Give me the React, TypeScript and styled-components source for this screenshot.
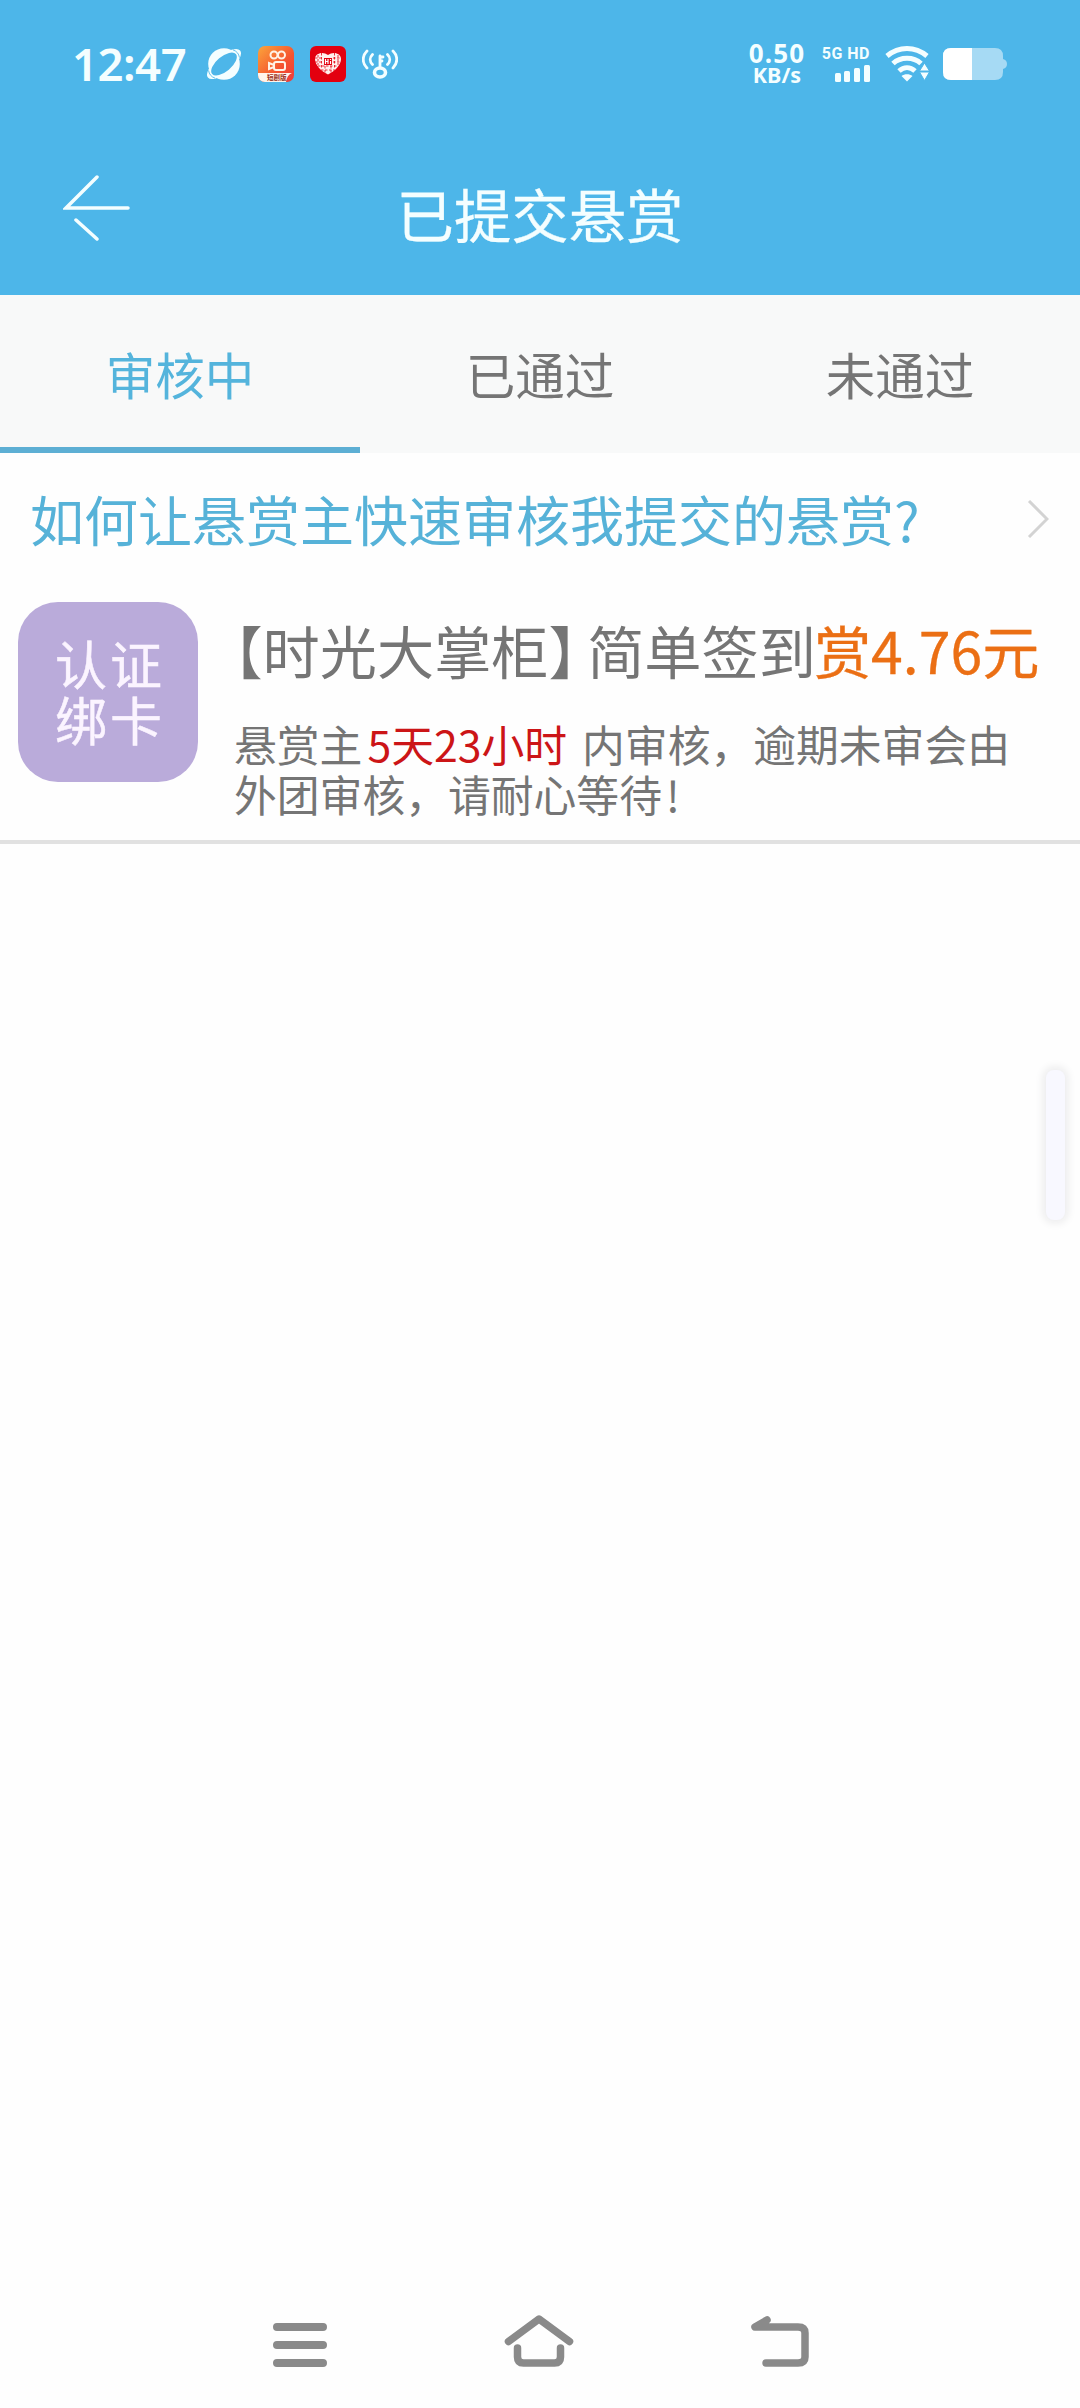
import React from 'react';
import styled, { createGlobalStyle } from 'styled-components';

const Global = createGlobalStyle`
  * { box-sizing: border-box; }
  html, body { margin: 0; background: #fefefe; }
  body { font-family: "Noto Sans CJK SC", "Noto Sans", sans-serif; }
  svg { display: block; flex: none; }
`;

const Screen = styled.div`
  width: 1080px;
  height: 2408px;
  display: flex;
  flex-direction: column;
  background: #fefefe;
  color: #757575;
  position: relative;
  overflow: hidden;
`;

const Header = styled.header`
  height: 295px;
  background: #4db6e9;
  color: #f4feff;
`;

const StatusBar = styled.div`
  height: 128px;
  padding: 0 73px 1px 72px;
  display: flex;
  justify-content: space-between;
`;

const StatusGroup = styled.div<{ $gap: number }>`
  display: flex;
  align-items: center;
  gap: ${(p) => p.$gap}px;
`;

const Clock = styled.span`
  width: 115px;
  font: 600 45.5px/60px "Noto Sans", sans-serif;
  letter-spacing: -0.5px;
  white-space: nowrap;
  margin: -2px 3px 0 0;
`;

const Speed = styled.div`
  width: 60px;
  font: 700 26px/22px "Noto Sans", sans-serif;
  text-align: center;
  white-space: nowrap;
  span { display: block; }
  span:first-child { letter-spacing: 1.2px; }
  span + span { font-size: 21.5px; line-height: 21px; }
`;

const Signal = styled.div`
  width: 50px;
  display: flex;
  flex-direction: column;
  align-items: flex-end;
  gap: 4px;
  font: 700 16px/15px Roboto, sans-serif;
  letter-spacing: 0.5px;
  white-space: nowrap;
  margin-right: 2px;
`;

const TitleBar = styled.div`
  height: 167px;
  display: grid;
  grid-template-columns: 200px 1fr 200px;
  align-items: center;
`;

const BackButton = styled.button`
  border: 0;
  padding: 0 0 10px 63px;
  background: none;
  color: inherit;
`;

const Title = styled.h1`
  margin: 3px 0 0;
  font-size: 57.4px;
  line-height: 70px;
  font-weight: 400;
  text-align: center;
  -webkit-text-stroke: 0.3px currentColor;
`;

const Tabs = styled.nav`
  height: 158px;
  display: grid;
  grid-template-columns: repeat(3, 1fr);
  background: #f8f9f9;
`;

const Tab = styled.div<{ $active?: boolean }>`
  display: flex;
  justify-content: center;
  align-items: center;
  padding-top: ${(p) => (p.$active ? 4 : 0)}px;
  padding-bottom: ${(p) => (p.$active ? 0 : 2)}px;
  font-size: 49.5px;
  color: ${(p) => (p.$active ? '#54b4dc' : '#757575')};
  border-bottom: ${(p) => (p.$active ? '6px solid #5dafd4' : '0')};
`;

const Question = styled.div`
  height: 137px;
  padding: 0 31px 5px 30px;
  display: flex;
  align-items: center;
  justify-content: space-between;
  font-size: 54px;
  line-height: 70px;
  white-space: nowrap;
  color: #56b2d8;
`;

const Card = styled.article`
  height: 254px;
  padding: 12px 18px 0;
  display: flex;
  gap: 36px;
  border-bottom: 4px solid #e1e1e1;
`;

const Badge = styled.div`
  width: 180px;
  height: 180px;
  flex: none;
  border-radius: 40px;
  background: #baabda;
  color: #fbf4ff;
  display: flex;
  flex-direction: column;
  justify-content: center;
  padding: 0 0 2px 37px;
  font-size: 52px;
  line-height: 56px;
  letter-spacing: 3px;
  -webkit-text-stroke: 0.5px currentColor;
`;

const CardBody = styled.div`
  flex: 1;
  white-space: nowrap;
`;

const TaskTitle = styled.div`
  margin-top: 9px;
  height: 76px;
  font-size: 57.2px;
  line-height: 76px;
`;

const Bracket = styled.span`
  font-feature-settings: "halt" 1;
  & + & { margin-right: 10px; }
`;

const Reward = styled.span`
  margin-left: -2px;
  color: #eb6f14;
  -webkit-text-stroke: 0.3px currentColor;
`;

const Notice = styled.p`
  margin: 31px 0 0;
  font-size: 42.8px;
  line-height: 50px;
`;

const Remaining = styled.span`
  color: #cc1517;
  margin: 0 15px 0 5px;
`;

const Ending = styled.span`
  margin-left: 4px;
`;

const EdgeHandle = styled.div`
  position: absolute;
  right: 15px;
  top: 1070px;
  width: 19px;
  height: 150px;
  border-radius: 8px;
  background: #f8f8ff;
  box-shadow: 0 0 9px 3px #ebebec;
`;

const NavBar = styled.footer`
  margin-top: auto;
  height: 118px;
  padding: 22px 267px 0 265px;
  display: flex;
  justify-content: space-between;
  color: #8a8a8a;
`;

const PlanetIcon = () => (
  <svg width="36" height="34" viewBox="0 0 36 34">
    <circle cx="18" cy="17" r="15.800" fill="currentColor" />
    <g transform="rotate(-40 18 17)">
      <ellipse cx="18" cy="17" rx="21" ry="8.500" fill="currentColor" />
      <ellipse cx="18" cy="17" rx="15.500" ry="7.500" fill="#4db6e9" />
      <path d="M2 12Q-1 17 2 22M34 12q3 5 0 10" fill="none" stroke="#4db6e9" strokeWidth=".8" />
    </g>
  </svg>
);

const VideoAppIcon = () => (
  <svg width="36" height="36" viewBox="0 0 36 36">
    <defs>
      <linearGradient id="video" x1="0" y1="0" x2="1" y2="1">
        <stop stopColor="#fba53b" /><stop offset=".6" stopColor="#f5542f" /><stop offset="1" stopColor="#ee3a3c" />
      </linearGradient>
      <clipPath id="round"><rect width="36" height="36" rx="7" /></clipPath>
    </defs>
    <g clipPath="url(#round)">
      <rect width="36" height="36" fill="url(#video)" />
      <g fill="none" stroke="#fff3e6" strokeWidth="2">
        <circle cx="16" cy="9" r="3.500" /><circle cx="23.500" cy="9" r="3.500" />
        <rect x="16" y="16" width="11" height="8" rx="2" /><path d="m16 19-5-2v6l5-2" />
      </g>
      <path d="M0 27h34q-5 2-6 9H0z" fill="#fff4ec" />
      <text x="9" y="34" fontSize="6.500" fontWeight="700" fill="#9c3322">短剧版</text>
    </g>
  </svg>
);

const HeartAppIcon = () => (
  <svg width="36" height="36" viewBox="0 0 36 36">
    <rect width="36" height="36" rx="6" fill="#e3000f" />
    <path d="M18 28.500C11 25 5 19 5 13c0-6 8-8 13-4 5-4 13-2 13 4 0 6-6 12-13 15.500Z" fill="#fff0ee" />
    <g fill="none" stroke="#e3000f" strokeWidth=".8" strokeDasharray="2.500 1.500">
      <path d="M8 9v10M11.500 7v16M24.500 7v16M28 9v10M15 20v7M21 20v7" />
      <path d="M5 12h8M5 16h8M23 12h8M23 16h8M8 20h20M11 24h14" />
    </g>
    <path d="M14 12h8v7h-8z" fill="#e3000f" />
    <path d="M15.500 13v5m0-2.500h2.500m0-2.500v5M20.500 15v3m0-5v1" stroke="#fff" strokeWidth="1.200" />
  </svg>
);

const HotspotIcon = () => (
  <svg width="36" height="34" viewBox="0 0 36 34" fill="none" stroke="currentColor" strokeWidth="2.800" strokeLinecap="round">
    <path d="M5 4C0 9 0 16 5 21M10.500 7.500c-3 3-3 7 0 10M31 4c5 5 5 12 0 17M25.500 7.500c3 3 3 7 0 10M18 20V9m0 1h3M18 14h2" />
    <ellipse cx="18" cy="25.500" rx="5.500" ry="4.500" strokeWidth="3.600" />
  </svg>
);

const SignalBars = () => (
  <svg width="36" height="17" viewBox="0 0 36 17" fill="currentColor">
    <rect x="1" y="8" width="6" height="9" rx="1.500" />
    <rect x="10" y="6" width="6" height="11" rx="1.500" />
    <rect x="20" y="3" width="6" height="14" rx="1.500" />
    <rect x="30" y="0" width="6" height="17" rx="1.500" />
  </svg>
);

const WifiIcon = () => (
  <svg width="44" height="36" viewBox="0 0 44 36">
    <g fill="none" stroke="currentColor" strokeWidth="5">
      <path d="M2 10C14 0 30 0 42 10M8 17.500c7.500-7 20.500-7 28 0M14 25c5-4.500 11-4.500 16 0" />
    </g>
    <path d="M16.500 30c3-2.500 8-2.500 11 0L22 35.500z" fill="currentColor" />
    <path d="m39.500 17 5 8h-10zM34.500 26h10l-5 8.500z" fill="currentColor" stroke="#4db6e9" strokeWidth="1" />
  </svg>
);

const BatteryIcon = () => (
  <svg width="65" height="34" viewBox="0 0 65 34">
    <path d="M9 1h44q8 0 8 8v3q4 1 4 5t-4 5v3q0 8-8 8H9q-8 0-8-8V9q0-8 8-8Z" fill="#a6daf4" />
    <path d="M30 1H9Q1 1 1 9v16q0 8 8 8h21z" fill="#fff" />
  </svg>
);

const App = () => (
  <>
    <Global />
    <Screen>
      <Header>
        <StatusBar>
          <StatusGroup $gap={16}>
            <Clock>12:47</Clock>
            <PlanetIcon />
            <VideoAppIcon />
            <HeartAppIcon />
            <HotspotIcon />
          </StatusGroup>
          <StatusGroup $gap={13}>
            <Speed><span>0.50</span><span>KB/s</span></Speed>
            <Signal><span>5G HD</span><SignalBars /></Signal>
            <WifiIcon />
            <BatteryIcon />
          </StatusGroup>
        </StatusBar>
        <TitleBar>
          <BackButton aria-label="返回">
            <svg width="68" height="68" viewBox="0 0 68 68" fill="none" stroke="currentColor" strokeWidth="3.500" strokeLinecap="round">
              <path d="M34 4 3 35h62M13 47l21 19" />
            </svg>
          </BackButton>
          <Title>已提交悬赏</Title>
        </TitleBar>
      </Header>
      <Tabs>
        <Tab $active>审核中</Tab>
        <Tab>已通过</Tab>
        <Tab>未通过</Tab>
      </Tabs>
      <Question>
        <span>如何让悬赏主快速审核我提交的悬赏?</span>
        <svg width="22" height="38" viewBox="0 0 22 38" fill="none" stroke="#d3d3d3" strokeWidth="3">
          <path d="m2 1 18 18L2 37" />
        </svg>
      </Question>
      <Card>
        <Badge><span>认证</span><span>绑卡</span></Badge>
        <CardBody>
          <TaskTitle>
            <Bracket>【</Bracket>时光大掌柜<Bracket>】</Bracket>简单签到<Reward>赏4.76元</Reward>
          </TaskTitle>
          <Notice>
            悬赏主<Remaining>5天23小时</Remaining>内审核，逾期未审会由<br />外团审核，请耐心等待<Ending>!</Ending>
          </Notice>
        </CardBody>
      </Card>
      <EdgeHandle />
      <NavBar>
        <svg width="66" height="60" viewBox="0 0 66 60" fill="none" stroke="currentColor" strokeWidth="8" strokeLinecap="round">
          <path d="M12 15h46M12 33h46M12 51h46" />
        </svg>
        <svg width="70" height="60" viewBox="0 0 70 60" fill="none" stroke="currentColor" strokeWidth="7.500" strokeLinecap="round" strokeLinejoin="round">
          <path d="M4.500 29.500 35 7l30.500 22.500M13.500 36v9q0 6 6 6h31q6 0 6-6v-9" />
        </svg>
        <svg width="66" height="60" viewBox="0 0 66 60" fill="none" stroke="currentColor" strokeWidth="7.500" strokeLinecap="round" strokeLinejoin="round">
          <path d="M20 8 8 15h43q7 0 7 6v24q0 6-7 6H19" />
        </svg>
      </NavBar>
    </Screen>
  </>
);

export default App;
